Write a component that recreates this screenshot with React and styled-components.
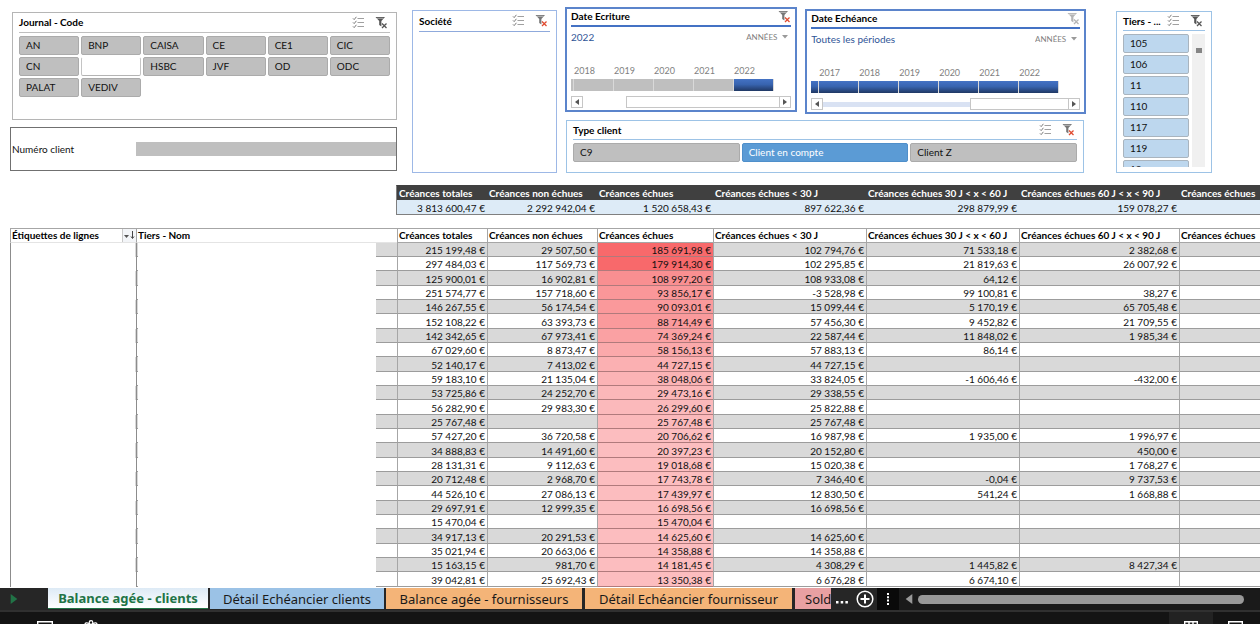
import React, { useState } from "react";
import styled, { createGlobalStyle, css } from "styled-components";

const GlobalStyle = createGlobalStyle`
  * {
    box-sizing: border-box;
  }
  body {
    margin: 0;
    background: #ffffff;
    color: #111111;
    font-family: Lato, "Open Sans", sans-serif;
    font-size: 10px;
  }
  button, input, select {
    font: inherit;
    color: inherit;
    margin: 0;
    padding: 0;
    border: 0;
    border-radius: 0;
    background: transparent;
  }
`;

const Page = styled.div`
  height: 100vh;
  display: flex;
  flex-direction: column;
  overflow: hidden;
`;
const Workspace = styled.main`
  flex: 1;
  min-height: 0;
  overflow: hidden;
`;

/* ---- filters ---- */
const Filters = styled.section`
  display: flex;
  align-items: flex-start;
  height: 185px;
  padding: 7px 0 0 10px;
`;
const JournalColumn = styled.div`
  flex: 0 0 387px;
  display: flex;
  flex-direction: column;
  gap: 7px;
  padding-top: 5px;
`;
const DateColumn = styled.div`
  flex: 0 0 521px;
  display: flex;
  flex-direction: column;
  gap: 6px;
  margin-left: 8px;
`;
const Timelines = styled.div`
  display: flex;
  align-items: flex-start;
  gap: 8px;
`;
const Panel = styled.div`
  border: 1px solid ${({ $border }) => $border || "#9dc3e6"};
  padding: 0 6px;
  background: #ffffff;
`;
const JournalPanel = styled(Panel)`
  height: 108px;
  margin-left: 2px;
`;
const CompanyPanel = styled(Panel)`
  flex: 0 0 145px;
  height: 163px;
  margin: 3px 0 0 15px;
`;
const TypePanel = styled(Panel)`
  height: 53px;
  margin: 0 2px 0 1px;
`;
const TiersPanel = styled(Panel)`
  flex: 0 0 96px;
  height: 162px;
  margin: 4px 0 0 30px;
`;
const TimelinePanel = styled(Panel)`
  flex: ${({ $grow }) => $grow} 1 0;
  height: 105px;
  margin-top: ${({ $drop }) => $drop || 0}px;
  border-width: 2px;
  padding: 0 4px;
`;
const PanelHead = styled.header`
  display: flex;
  align-items: center;
  height: ${({ $height }) => $height || 20}px;
  margin-bottom: 3px;
  padding: 0 ${({ $inset }) => $inset || 0}px ${({ $thick }) => ($thick ? 2 : 1)}px 0;
  border-bottom: ${({ $thick }) => ($thick ? 2 : 1)}px solid
    ${({ $line }) => $line || "#9dc3e6"};
`;
const PanelTitle = styled.h2`
  flex: 1;
  margin: 0;
  font-size: 10px;
  line-height: 14px;
  font-weight: bold;
  color: #000000;
  white-space: nowrap;
`;
const IconButton = styled.button`
  display: flex;
  width: 13px;
  height: 13px;
  margin-left: ${({ $gap }) => $gap || 0}px;
  cursor: pointer;
`;
const SlicerGrid = styled.div`
  display: grid;
  grid-template-columns: repeat(${({ $columns }) => $columns}, 1fr);
  gap: 2px;
`;
const tones = {
  grey: css`
    background: #bfbfbf;
    border-color: #ababab;
  `,
  light: css`
    background: #bdd7ee;
    border-color: #a9b4be;
  `,
  blue: css`
    background: #5b9bd5;
    border-color: #4f8fca;
    color: #ffffff;
  `,
  empty: css`
    background: #ffffff;
    border-color: #ffffff #c4c4c4 #b4b4b4;
  `,
};
const SlicerButton = styled.button`
  height: 19px;
  padding: 0 0 0 6px;
  border: 1px solid;
  border-radius: 2px;
  line-height: 15px;
  text-align: left;
  cursor: pointer;
  ${({ $tone }) => tones[$tone]}
`;
const ClientNumber = styled.div`
  display: flex;
  align-items: center;
  height: 44px;
  border: 1px solid #707070;
`;
const ClientLabel = styled.label`
  flex: 0 0 125px;
  padding-left: 1px;
`;
const ClientInput = styled.input`
  flex: 1;
  min-width: 0;
  height: 14px;
  background: #bfbfbf;
`;
const TiersBody = styled.div`
  display: flex;
  justify-content: space-between;
  height: 133px;
  overflow: hidden;
`;
const TiersList = styled.div`
  flex: 0 0 66px;
  display: flex;
  flex-direction: column;
  gap: 2px;
  & > button {
    flex: none;
  }
`;
const TiersScroll = styled.div`
  width: 13px;
  padding: 14px 4px 0 4px;
  background: #f0f0f0;
`;
const TiersThumb = styled.div`
  width: 6px;
  height: 5px;
  background: #858585;
`;

/* ---- timelines ---- */
const PeriodRow = styled.div`
  display: flex;
  align-items: center;
  justify-content: space-between;
  height: 14px;
  margin-bottom: 21px;
  color: #2f5597;
`;
const LevelPicker = styled.div`
  display: flex;
  align-items: center;
  gap: 3px;
  margin-right: 3px;
`;
const LevelSelect = styled.select`
  appearance: none;
  width: 33px;
  font-size: 8px;
  line-height: 12px;
  color: #7f7f7f;
`;
const Years = styled.div`
  display: flex;
  height: 14px;
  padding-left: ${({ $lead }) => $lead}px;
  font-size: 9px;
  line-height: 12px;
  color: #7f7f7f;
`;
const Year = styled.span`
  flex: 0 0 40px;
`;
const Blocks = styled.div`
  display: flex;
  gap: 1px;
  height: 12px;
  background: linear-gradient(#d9d9d9, #d9d9d9) 0 0 / ${({ $length }) => $length}px
    100% no-repeat;
`;
const Block = styled.span`
  flex: 0 0 ${({ $width }) => $width || 39}px;
  background: ${({ $on }) =>
    $on ? "linear-gradient(#4472c4, #3864b0 45%, #203864)" : "#bfbfbf"};
`;
const TimeScroll = styled.div`
  display: flex;
  align-items: center;
  height: 12px;
  margin-top: 5px;
`;
const ScrollArrow = styled.button`
  display: flex;
  align-items: center;
  justify-content: center;
  flex: 0 0 12px;
  height: 12px;
  border: 1px solid #c6c6c6;
`;
const ScrollTrack = styled.div`
  flex: ${({ $grow }) => $grow} 1 0;
  height: 5px;
  background: ${({ $color }) => $color};
`;
const ScrollThumb = styled.div`
  flex: ${({ $grow }) => $grow} 1 0;
  height: 12px;
  border: 1px solid #c6c6c6;
  border-right: 0;
`;

/* ---- tables ---- */
const Table = styled.table`
  width: 100%;
  min-width: 1260px;
  table-layout: fixed;
  border-collapse: separate;
  border-spacing: 0;
`;
const HeadCell = styled.th`
  height: 15px;
  padding: 0 0 0 1px;
  line-height: 13px;
  text-align: left;
  white-space: nowrap;
  color: #000000;
  border-top: 1px solid #a6a6a6;
  border-bottom: 1px solid ${({ $plain }) => ($plain ? "#e4e4e4" : "#a6a6a6")};
  border-left: 1px solid #a6a6a6;
`;
const Cell = styled.td`
  padding: 1px 2px 0 0;
  line-height: 12px;
  text-align: right;
  white-space: nowrap;
  border-bottom: 1px solid #9c9c9c;
  border-left: 1px solid #a6a6a6;
  ${({ $heat }) => $heat && `background: ${$heat}; border-bottom-color: #b07a7c;`}
`;
const LabelCell = styled.td`
  padding: 0;
  border-left: 1px solid #8c8c8c;
  background: linear-gradient(
    90deg,
    #ffffff calc(100% - 1px),
    transparent calc(100% - 1px)
  );
`;
const NameCell = styled.td`
  padding: 0;
  border-left: 1px solid #8c8c8c;
  background: linear-gradient(
      90deg,
      transparent 1px,
      #ffffff 1px,
      #ffffff 239px,
      transparent 239px
    ),
    linear-gradient(to top, #9c9c9c 1px, transparent 1px);
`;
const MarginCell = styled.td`
  padding: 0;
  background: #ffffff;
`;
const Row = styled.tr`
  height: 14px;
  background: #ffffff;
  &:nth-child(odd) {
    background: #d9d9d9;
  }
  &:nth-child(3n) {
    height: 15px;
  }
`;
const SummaryWrap = styled.div`
  margin: 0 0 13px 396px;
  overflow: hidden;
`;
const SummaryTable = styled(Table)`
  min-width: 864px;
  border: 1px solid #7f7f7f;
  border-right: 0;
  border-top-color: #404040;
  background: #ddebf7;
  th {
    height: 14px;
    padding-left: 2px;
    border: 0;
    background: #404040;
    color: #ffffff;
  }
  td {
    height: 14px;
    border: 0;
  }
`;
const LabelHead = styled.div`
  display: flex;
  justify-content: space-between;
`;
const SortButton = styled.button`
  display: flex;
  align-items: center;
  justify-content: center;
  width: 14px;
  height: 13px;
  border-left: 1px solid #c9c9c9;
  background: #f3f5f8;
`;

/* ---- bottom bars ---- */
const SheetBar = styled.nav`
  display: flex;
  flex: 0 0 24px;
  height: 24px;
  padding-left: 48px;
  background: #262626;
  border-bottom: 2px solid #303030;
  position: relative;
`;
const NextSheet = styled.button`
  position: absolute;
  left: 9px;
  top: 6px;
  display: flex;
`;
const SheetTab = styled.button`
  flex: 0 0 ${({ $width }) => $width}px;
  height: 21px;
  margin-right: ${({ $gap }) => $gap}px;
  overflow: hidden;
  background: ${({ $color }) => $color};
  font-family: "Noto Sans", "Open Sans", sans-serif;
  font-size: 13px;
  line-height: 20px;
  white-space: nowrap;
  text-align: center;
  color: #1a1a1a;
  cursor: pointer;
  ${({ $active }) =>
    $active &&
    css`
      background: linear-gradient(#ddeaf5, #ffffff);
      border-bottom: 1px solid #217346;
      color: #217346;
      font-weight: bold;
    `}
  ${({ $cut }) =>
    $cut &&
    css`
      padding-left: 10px;
      text-align: left;
    `}
`;
const BarButton = styled.button`
  display: flex;
  align-items: center;
  justify-content: center;
  flex: 0 0 ${({ $width }) => $width}px;
  height: 22px;
  background: ${({ $color }) => $color || "transparent"};
`;
const SheetScroll = styled.div`
  flex: 1;
  display: flex;
  align-items: center;
  gap: 4px;
  height: 22px;
  padding: 0 16px 0 5px;
  background: #1a1a1a;
`;
const SheetThumb = styled.div`
  flex: 1;
  height: 9px;
  border-radius: 5px;
  background: #999999;
`;
const StatusBar = styled.footer`
  display: flex;
  flex: 0 0 12px;
  justify-content: space-between;
  overflow: hidden;
  padding: 0 3px 0 37px;
  background: #141414;
`;
const StatusGroup = styled.div`
  display: flex;
  gap: ${({ $gap }) => $gap || 0}px;
`;
const StatusButton = styled.button`
  display: flex;
  justify-content: center;
  width: ${({ $width }) => $width}px;
  height: 26px;
  padding-top: 8px;
  background: ${({ $on }) => ($on ? "#222222" : "transparent")};
`;

const CheckList = () => (
  <svg width="13" height="13" viewBox="0 0 13 13" fill="none" stroke="#7a7a7a">
    <path d="M5.5 2.5H12M5.5 6.5H12M5.5 10.5H12" stroke="#a0a0a0" />
    <path d="M1 2.4l1.2 1.2L4.4.8M1 6.4l1.2 1.2 2.2-2.8M1 10.4l1.2 1.2 2.2-2.8" />
  </svg>
);

const ClearFilter = ({ color = "#555555", cross = "#555555" }) => (
  <svg width="13" height="13" viewBox="0 0 13 13">
    <path d="M.5 1h9.500L6.400 5v5.500L4.200 9V5z" fill={color} />
    <path d="M2 2.300h6.500" stroke="#ffffff" strokeWidth=".5" />
    <path d="M7 7.500l4.500 4.500M11.500 7.500L7 12" stroke={cross} strokeWidth="1.300" />
  </svg>
);

const Triangle = ({ flip, color = "#555555", size = 6 }) => (
  <svg width={size} height={size} viewBox="0 0 6 6">
    <path d={flip ? "M5 0v6L1 3z" : "M1 0v6l4-3z"} fill={color} />
  </svg>
);

const SlicerHead = ({ title, line, cross, funnel, height }) => (
  <PanelHead $line={line} $height={height} $inset={2}>
    <PanelTitle>{title}</PanelTitle>
    <IconButton aria-label="Sélection multiple">
      <CheckList />
    </IconButton>
    <IconButton $gap={10} aria-label="Effacer le filtre">
      <ClearFilter color={funnel} cross={cross} />
    </IconButton>
  </PanelHead>
);

const Timeline = ({ title, period, lead, years, blocks, funnel, cross, track, grow, drop }) => (
  <TimelinePanel $border="#5b84cb" $grow={grow} $drop={drop}>
    <PanelHead $height={18} $thick $line="#4472c4">
      <PanelTitle>{title}</PanelTitle>
      <IconButton aria-label="Effacer le filtre">
        <ClearFilter color={funnel} cross={cross} />
      </IconButton>
    </PanelHead>
    <PeriodRow>
      {period}
      <LevelPicker>
        <LevelSelect aria-label={title}>
          <option>ANNÉES</option>
        </LevelSelect>
        <svg width="6" height="4" viewBox="0 0 6 4">
          <path d="M0 0h6L3 3.500z" fill="#9a9a9a" />
        </svg>
      </LevelPicker>
    </PeriodRow>
    <Years $lead={lead + 1}>
      {years.map((year) => (
        <Year key={year}>{year}</Year>
      ))}
    </Years>
    <Blocks $length={lead + 1 + years.length * 40}>
      <Block $width={lead} $on={blocks[0]} />
      {years.map((year, index) => (
        <Block key={year} $on={blocks[index + 1]} />
      ))}
    </Blocks>
    <TimeScroll>
      <ScrollArrow aria-label="Précédent">
        <Triangle flip />
      </ScrollArrow>
      <ScrollTrack $grow={track.before} $color={track.color} />
      <ScrollThumb $grow={track.thumb} />
      <ScrollArrow aria-label="Suivant">
        <Triangle />
      </ScrollArrow>
    </TimeScroll>
  </TimelinePanel>
);

const journals = [
  "AN", "BNP", "CAISA", "CE", "CE1", "CIC",
  "CN", "", "HSBC", "JVF", "OD", "ODC",
  "PALAT", "VEDIV",
];
const tiers = ["105", "106", "11", "110", "117", "119", "12"];
const clientTypes = ["C9", "Client en compte", "Client Z"];

const columns = [
  "Créances totales",
  "Créances non échues",
  "Créances échues",
  "Créances échues < 30 J",
  "Créances échues 30 J < x < 60 J",
  "Créances échues 60 J < x < 90 J",
  "Créances échues",
];
const totals = ["3 813 600,47", "2 292 942,04", "1 520 658,43", "897 622,36", "298 879,99", "159 078,27", ""];

const rows = [
  ["215 199,48", "29 507,50", "185 691,98", "102 794,76", "71 533,18", "2 382,68"],
  ["297 484,03", "117 569,73", "179 914,30", "102 295,85", "21 819,63", "26 007,92"],
  ["125 900,01", "16 902,81", "108 997,20", "108 933,08", "64,12", ""],
  ["251 574,77", "157 718,60", "93 856,17", "-3 528,98", "99 100,81", "38,27"],
  ["146 267,55", "56 174,54", "90 093,01", "15 099,44", "5 170,19", "65 705,48"],
  ["152 108,22", "63 393,73", "88 714,49", "57 456,30", "9 452,82", "21 709,55"],
  ["142 342,65", "67 973,41", "74 369,24", "22 587,44", "11 848,02", "1 985,34"],
  ["67 029,60", "8 873,47", "58 156,13", "57 883,13", "86,14", ""],
  ["52 140,17", "7 413,02", "44 727,15", "44 727,15", "", ""],
  ["59 183,10", "21 135,04", "38 048,06", "33 824,05", "-1 606,46", "-432,00"],
  ["53 725,86", "24 252,70", "29 473,16", "29 338,55", "", ""],
  ["56 282,90", "29 983,30", "26 299,60", "25 822,88", "", ""],
  ["25 767,48", "", "25 767,48", "25 767,48", "", ""],
  ["57 427,20", "36 720,58", "20 706,62", "16 987,98", "1 935,00", "1 996,97"],
  ["34 888,83", "14 491,60", "20 397,23", "20 152,80", "", "450,00"],
  ["28 131,31", "9 112,63", "19 018,68", "15 020,38", "", "1 768,27"],
  ["20 712,48", "2 968,70", "17 743,78", "7 346,40", "-0,04", "9 737,53"],
  ["44 526,10", "27 086,13", "17 439,97", "12 830,50", "541,24", "1 668,88"],
  ["29 697,91", "12 999,35", "16 698,56", "16 698,56", "", ""],
  ["15 470,04", "", "15 470,04", "", "", ""],
  ["34 917,13", "20 291,53", "14 625,60", "14 625,60", "", ""],
  ["35 021,94", "20 663,06", "14 358,88", "14 358,88", "", ""],
  ["15 163,15", "981,70", "14 181,45", "4 308,29", "1 445,82", "8 427,34"],
  ["39 042,81", "25 692,43", "13 350,38", "6 676,28", "6 674,10", ""],
];

// colour scale of the "Créances échues" column, strongest first
const heat = [
  "#f8696b", "#f8696b", "#f98f91", "#fa9799", "#fa999b", "#fa9a9c", "#faa1a3", "#fba9ab",
  "#fbb0b2", "#fbb3b5", "#fbb7b9", "#fbb9bb", "#fbb9bb",
];

const sheets = [
  { name: "Balance agée - clients", width: 160, gap: 2 },
  { name: "Détail Echéancier clients", width: 174, gap: 2, color: "#9bc2e6" },
  { name: "Balance agée - fournisseurs", width: 196, gap: 3, color: "#f4b478" },
  { name: "Détail Echéancier fournisseur", width: 207, gap: 3, color: "#f4b478" },
  { name: "Solde", width: 36, gap: 0, color: "#e8a0a2", cut: true },
];

const AmountCols = () => (
  <>
    <col style={{ width: 90 }} />
    <col style={{ width: 110 }} />
    <col style={{ width: 116 }} />
    <col style={{ width: 153 }} />
    <col style={{ width: 153 }} />
    <col style={{ width: 160 }} />
    <col />
  </>
);

const euro = (amount) => (amount ? `${amount} €` : "");

export default function App() {
  const [active, setActive] = useState(0);

  return (
    <Page>
      <GlobalStyle />
      <Workspace>
        <Filters>
          <JournalColumn>
            <JournalPanel $border="#b5b5b5">
              <SlicerHead title="Journal - Code" line="#bfbfbf" />
              <SlicerGrid $columns={6}>
                {journals.map((code) => (
                  <SlicerButton key={code} $tone={code ? "grey" : "empty"}>
                    {code}
                  </SlicerButton>
                ))}
              </SlicerGrid>
            </JournalPanel>
            <ClientNumber>
              <ClientLabel htmlFor="client">Numéro client</ClientLabel>
              <ClientInput id="client" />
            </ClientNumber>
          </JournalColumn>

          <CompanyPanel $border="#9db8e6">
            <SlicerHead title="Société" line="#8faadc" cross="#e04a2f" funnel="#777777" height={21} />
          </CompanyPanel>

          <DateColumn>
            <Timelines>
              <Timeline
                title="Date Ecriture"
                period="2022"
                lead={2}
                years={[2018, 2019, 2020, 2021, 2022]}
                blocks={[false, false, false, false, false, true]}
                funnel="#777777"
                cross="#e04a2f"
                track={{ before: 43, thumb: 153, color: "#ffffff" }}
                grow={231}
              />
              <Timeline
                title="Date Echéance"
                period="Toutes les périodes"
                lead={7}
                years={[2017, 2018, 2019, 2020, 2021, 2022]}
                blocks={[true, true, true, true, true, true, true]}
                funnel="#b5b5b5"
                cross="#b5b5b5"
                track={{ before: 149, thumb: 98, color: "#d9e2f3" }}
                grow={282}
                drop={2}
              />
            </Timelines>
            <TypePanel>
              <SlicerHead title="Type client" cross="#e04a2f" funnel="#777777" height={19} />
              <SlicerGrid $columns={3}>
                {clientTypes.map((type, index) => (
                  <SlicerButton key={type} $tone={index === 1 ? "blue" : "grey"}>
                    {type}
                  </SlicerButton>
                ))}
              </SlicerGrid>
            </TypePanel>
          </DateColumn>

          <TiersPanel>
            <SlicerHead title="Tiers - ..." height={19} />
            <TiersBody>
              <TiersList>
                {tiers.map((code) => (
                  <SlicerButton key={code} $tone="light">
                    {code}
                  </SlicerButton>
                ))}
              </TiersList>
              <TiersScroll>
                <TiersThumb />
              </TiersScroll>
            </TiersBody>
          </TiersPanel>
        </Filters>

        <SummaryWrap>
          <SummaryTable>
            <colgroup>
              <AmountCols />
            </colgroup>
            <thead>
              <tr>
                {columns.map((column, index) => (
                  <HeadCell key={index}>{column}</HeadCell>
                ))}
              </tr>
            </thead>
            <tbody>
              <tr>
                {totals.map((total, index) => (
                  <Cell key={index}>{euro(total)}</Cell>
                ))}
              </tr>
            </tbody>
          </SummaryTable>
        </SummaryWrap>

        <Table>
          <colgroup>
            <col style={{ width: 10 }} />
            <col style={{ width: 126 }} />
            <col style={{ width: 261 }} />
            <AmountCols />
          </colgroup>
          <thead>
            <tr>
              <MarginCell />
              <HeadCell $plain>
                <LabelHead>
                  Étiquettes de lignes
                  <SortButton aria-label="Trier">
                    <svg width="11" height="9" viewBox="0 0 11 9">
                      <path d="M0 4h5L2.500 7z" fill="#555555" />
                      <path d="M8.500 0v7M7 5.500L8.500 7.500 10 5.500" stroke="#444444" fill="none" />
                    </svg>
                  </SortButton>
                </LabelHead>
              </HeadCell>
              <HeadCell $plain>Tiers - Nom</HeadCell>
              {columns.map((column, index) => (
                <HeadCell key={index}>{column}</HeadCell>
              ))}
            </tr>
          </thead>
          <tbody>
            {rows.map((row, index) => (
              <Row key={index}>
                <MarginCell />
                <LabelCell />
                <NameCell />
                {row.map((amount, column) => (
                  <Cell key={column} $heat={column === 2 && (heat[index] || "#fcbdbf")}>
                    {euro(amount)}
                  </Cell>
                ))}
                <Cell />
              </Row>
            ))}
          </tbody>
        </Table>
      </Workspace>

      <SheetBar>
        <NextSheet aria-label="Feuille suivante">
          <Triangle color="#217346" size={10} />
        </NextSheet>
        {sheets.map((sheet, index) => (
          <SheetTab
            key={sheet.name}
            $width={sheet.width}
            $gap={sheet.gap}
            $color={sheet.color || "#ffffff"}
            $active={index === active}
            $cut={sheet.cut}
            onClick={() => setActive(index)}
          >
            {sheet.name}
          </SheetTab>
        ))}
        <BarButton $width={22} aria-label="Autres feuilles">
          <svg width="12" height="14" viewBox="0 0 12 14" fill="#ffffff">
            <path d="M0 9h2.500v2.500H0zM4.700 9h2.500v2.500H4.700zM9.400 9h2.500v2.500H9.400z" />
          </svg>
        </BarButton>
        <BarButton $width={24} aria-label="Nouvelle feuille">
          <svg width="18" height="18" viewBox="0 0 18 18" fill="none" stroke="#ffffff">
            <circle cx="9" cy="9" r="7.800" strokeWidth="1.500" />
            <path d="M9 4.500v9M4.500 9h9" strokeWidth="2" />
          </svg>
        </BarButton>
        <BarButton $width={22} $color="#0a0a0a" aria-label="Redimensionner">
          <svg width="4" height="12" viewBox="0 0 4 12" fill="#ffffff">
            <path d="M1 0h2v2H1zM1 3.300h2v2H1zM1 6.600h2v2H1zM1 10h2v2H1z" />
          </svg>
        </BarButton>
        <SheetScroll>
          <Triangle flip color="#999999" size={10} />
          <SheetThumb />
        </SheetScroll>
      </SheetBar>

      <StatusBar>
        <StatusGroup $gap={30}>
          <StatusButton $width={16} aria-label="Enregistrer une macro">
            <svg width="16" height="14" viewBox="0 0 16 14" fill="none" stroke="#ffffff">
              <path d="M.7 1.700h14.600v11H.7zM3 5h10" strokeWidth="1.400" />
            </svg>
          </StatusButton>
          <StatusButton $width={16} aria-label="Accessibilité">
            <svg width="14" height="14" viewBox="0 0 14 14" fill="none" stroke="#ffffff">
              <circle cx="7" cy="2.500" r="1.800" strokeWidth="1.200" />
              <path d="M1 4.500c0-2 2-2 4-1M13 4.500c0-2-2-2-4-1M5 6v7M9 6v7" strokeWidth="1.300" />
            </svg>
          </StatusButton>
        </StatusGroup>
        <StatusGroup>
          <StatusButton $width={44} $on aria-label="Normal">
            <svg width="14" height="14" viewBox="0 0 14 14" fill="none" stroke="#ffffff">
              <path d="M.7 1.700h12.600v11H.7zM5 1.500V13M9 1.500V13M.7 6h12.600" strokeWidth="1.400" />
            </svg>
          </StatusButton>
          <StatusButton $width={44} aria-label="Mise en page">
            <svg width="15" height="14" viewBox="0 0 15 14" fill="none" stroke="#ffffff">
              <path d="M.7 1.700h13.600v11H.7zM3.500 5h8v8" strokeWidth="1.400" />
            </svg>
          </StatusButton>
        </StatusGroup>
      </StatusBar>
    </Page>
  );
}
